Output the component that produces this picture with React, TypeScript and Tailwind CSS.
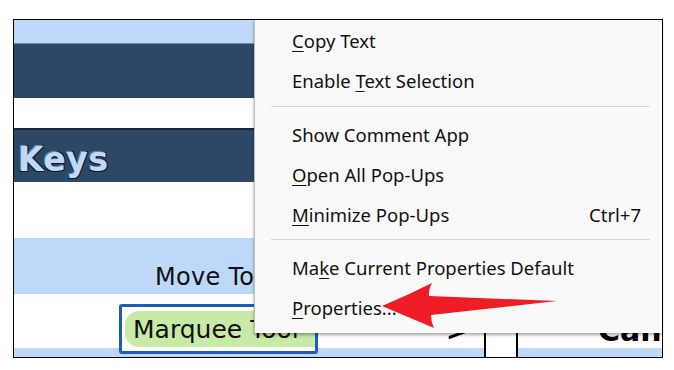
import React from "react";

const verdana = { fontFamily: '"DejaVu Sans", Verdana, sans-serif' };
const segoe = { fontFamily: '"Noto Sans", "Open Sans", sans-serif' };

function Item({ children, right }: { children: React.ReactNode; right?: string }) {
  return (
    <div className="flex h-[40px] items-center justify-between pl-[37px] pr-[21px] text-[18.5px] text-[#111]">
      <span>{children}</span>
      {right && <span>{right}</span>}
    </div>
  );
}

function Sep({ top, bottom }: { top: string; bottom: string }) {
  return <div className={`ml-[16px] mr-[12px] h-px bg-[#d6d6d6] ${top} ${bottom}`} />;
}

export default function App() {
  return (
    <div className="relative h-[370px] w-[674px] overflow-hidden bg-white">
      <div className="ml-[13px] mt-[19px] flex h-[339px] w-[650px] flex-col border border-black">
        <div className="h-[23px] bg-[#bdd8f8]" />
        <div className="h-[55px] border-t border-[#6f86a6] bg-[#2d4767]" />
        <div className="h-[30px] bg-white" />
        <div className="flex h-[54px] items-end border-t-2 border-[#172940] bg-[#2d4767] pb-[6px] pl-[4px]">
          <span
            className="text-[33px] font-bold leading-none tracking-[0.5px] text-[#bfdaf8] [text-shadow:1px_1px_0_#0c1a2c,-1px_-1px_0_#6d86a6,1px_-1px_0_#0c1a2c,-1px_1px_0_#0c1a2c]"
            style={verdana}
          >
            Keys
          </span>
        </div>
        <div className="h-[56px] bg-white" />
        <div className="flex h-[56px] items-end bg-[#bdd8f8] pb-[5px] pl-[141px]">
          <span className="whitespace-nowrap text-[24px] leading-none tracking-[0.3px] text-[#111]" style={verdana}>
            Move To
          </span>
        </div>
        <div className="flex flex-1">
          <div className="flex w-[470px] flex-col">
            <div className="flex h-[54px] items-start bg-white pl-[105px] pt-[10px]">
              <div className="relative z-10 flex h-[50px] w-[199px] items-center overflow-hidden rounded-[3px] border-[3px] border-[#1f5cb3] bg-white pl-[3px]">
                <div className="flex h-[36px] items-center rounded-l-[14px] bg-[#c8eaa8] pl-[8px] pr-[20px]">
                  <span className="whitespace-nowrap text-[25px] leading-none text-[#111]" style={verdana}>
                    Marquee Tool
                  </span>
                </div>
              </div>
              <span className="ml-[128px] mt-[14px] text-[26px] font-bold leading-none text-black" style={verdana}>
                &gt;
              </span>
            </div>
            <div className="flex-1 bg-[#bdd8f8]" />
          </div>
          <div className="w-[34px] border-x-2 border-black bg-white" />
          <div className="flex flex-1 flex-col">
            <div className="flex h-[54px] items-end bg-white pb-[2px] pl-[80px]">
              <span className="text-[30px] font-bold leading-none text-black" style={verdana}>
                Can
              </span>
            </div>
            <div className="flex-1 bg-[#bdd8f8]" />
          </div>
        </div>
      </div>

      <div
        className="absolute left-[254px] top-[20px] z-20 h-[313px] w-[408px] border-l border-[#bdbdbd] bg-[#f9f9f9] pt-px shadow-[0_2px_3px_rgba(0,0,0,0.35)]"
        style={segoe}
      >
        <Item>
          <span className="underline underline-offset-[3px]">C</span>opy Text
        </Item>
        <Item>
          Enable <span className="underline underline-offset-[3px]">T</span>ext Selection
        </Item>
        <Sep top="mt-[5px]" bottom="mb-[8px]" />
        <Item>Show Comment App</Item>
        <Item>
          <span className="underline underline-offset-[3px]">O</span>pen All Pop-Ups
        </Item>
        <Item right="Ctrl+7">
          <span className="underline underline-offset-[3px]">M</span>inimize Pop-Ups
        </Item>
        <Sep top="mt-[4px]" bottom="mb-[8px]" />
        <Item>
          Ma<span className="underline underline-offset-[3px]">k</span>e Current Properties Default
        </Item>
        <Item>
          <span className="underline underline-offset-[3px]">P</span>roperties...
        </Item>
      </div>

      <svg className="absolute left-0 top-0 z-30" width="674" height="370" viewBox="0 0 674 370">
        <path
          d="M382 306 Q408 295 432 283 Q428 290 429 296 L557 301 L431 315 Q431 322 434 328 Q408 317 382 306 Z"
          fill="#ee1c25"
        />
      </svg>
    </div>
  );
}
